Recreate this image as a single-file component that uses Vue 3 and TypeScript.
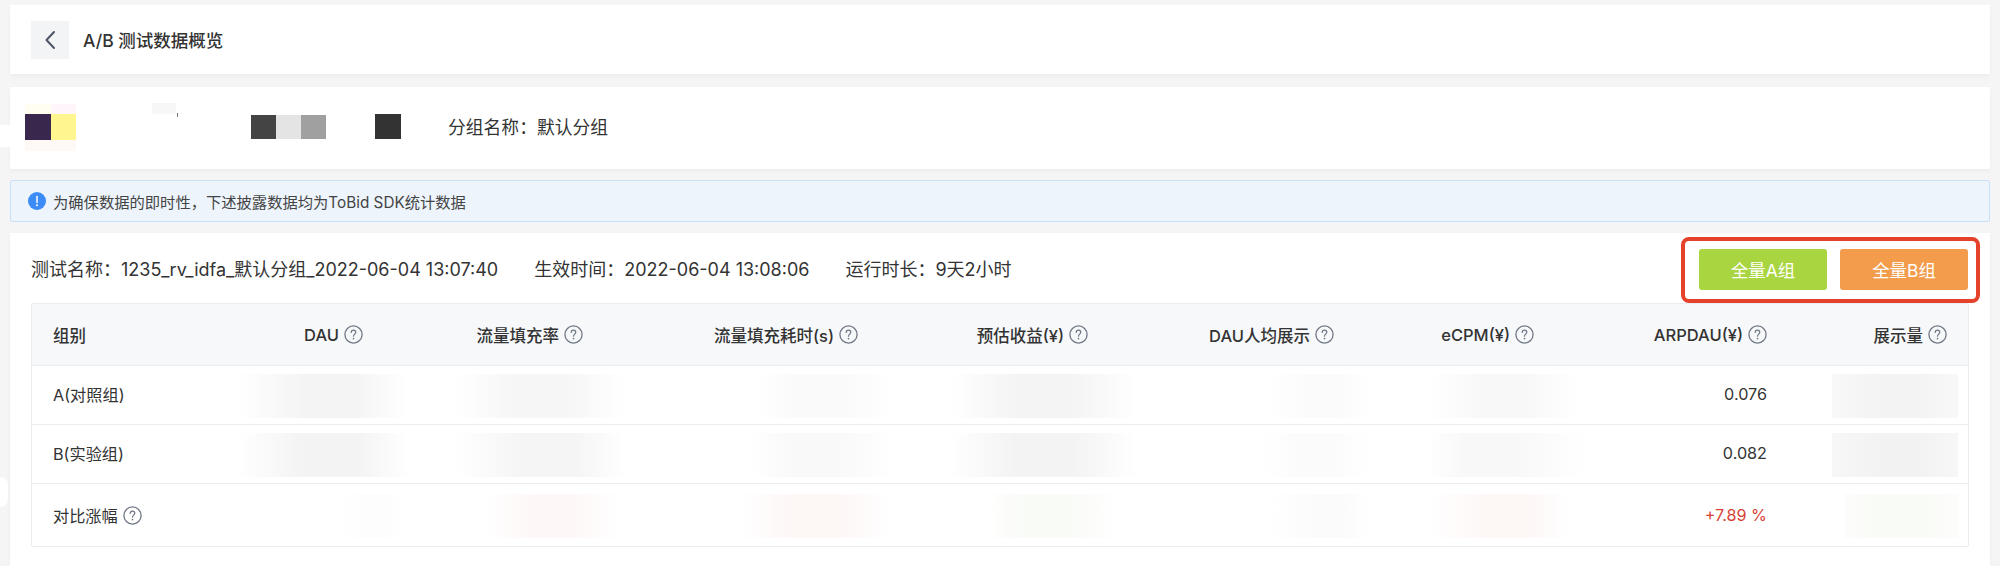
<script setup lang="ts">
interface Cell { text?: string; help?: boolean; red?: boolean }
interface Patch { left: number; width: number; peak: number; color: string; edge?: string }

const headers = [
  { text: '组别' },
  { text: 'DAU', help: true },
  { text: '流量填充率', help: true },
  { text: '流量填充耗时(s)', help: true },
  { text: '预估收益(¥)', help: true },
  { text: 'DAU人均展示', help: true },
  { text: 'eCPM(¥)', help: true },
  { text: 'ARPDAU(¥)', help: true },
  { text: '展示量', help: true },
]

const rows: { cells: Cell[]; patches: Patch[]; cls: string }[] = [
  {
    cls: 'row-a',
    cells: [{ text: 'A(对照组)' }, {}, {}, {}, {}, {}, {}, { text: '0.076' }, {}],
    patches: [
      { left: 237, width: 169, peak: 55, color: '#f4f4f4' },
      { left: 455, width: 170, peak: 50, color: '#f6f6f6' },
      { left: 758, width: 138, peak: 45, color: '#fafafa' },
      { left: 950, width: 187, peak: 50, color: '#f4f4f4' },
      { left: 1267, width: 103, peak: 55, color: '#fbfbfb' },
      { left: 1427, width: 153, peak: 50, color: '#f8f8f8' },
      { left: 1832, width: 126, peak: 55, color: '#f3f3f3', edge: '#f8f8f8' },
    ],
  },
  {
    cls: 'row-b',
    cells: [{ text: 'B(实验组)' }, {}, {}, {}, {}, {}, {}, { text: '0.082' }, {}],
    patches: [
      { left: 237, width: 171, peak: 55, color: '#f3f3f3' },
      { left: 455, width: 170, peak: 55, color: '#f5f5f5' },
      { left: 750, width: 146, peak: 45, color: '#f9f9f9' },
      { left: 950, width: 187, peak: 50, color: '#f3f3f3' },
      { left: 1262, width: 108, peak: 50, color: '#fbfbfb' },
      { left: 1427, width: 160, peak: 40, color: '#f8f8f8' },
      { left: 1832, width: 126, peak: 55, color: '#f2f2f2', edge: '#f7f7f7' },
    ],
  },
  {
    cls: 'row-c',
    cells: [{ text: '对比涨幅', help: true }, {}, {}, {}, {}, {}, {}, { text: '+7.89 %', red: true }, {}],
    patches: [
      { left: 340, width: 70, peak: 50, color: '#fdfdfd' },
      { left: 484, width: 136, peak: 50, color: '#fdf8f7' },
      { left: 740, width: 152, peak: 50, color: '#fdf7f6' },
      { left: 985, width: 137, peak: 45, color: '#f9fbf7' },
      { left: 1270, width: 100, peak: 60, color: '#fbfbfb' },
      { left: 1430, width: 140, peak: 55, color: '#fdf7f6' },
      { left: 1845, width: 113, peak: 50, color: '#f9fbf6', edge: '#fcfdfb' },
    ],
  },
]

function patchStyle(p: Patch) {
  const edge = p.edge ?? '#ffffff'
  return {
    left: `${p.left - 32}px`,
    width: `${p.width}px`,
    background: `linear-gradient(90deg, ${edge} 0%, ${p.color} ${p.peak - 15}%, ${p.color} ${p.peak + 15}%, ${edge} 100%)`,
  }
}

const mosaic = [
  { l: 25, t: 104, w: 26, h: 10, c: '#fffef0' },
  { l: 51, t: 104, w: 25, h: 10, c: '#fff6fb' },
  { l: 25, t: 114, w: 26, h: 26, c: '#3a274d' },
  { l: 51, t: 114, w: 25, h: 26, c: '#fff68f' },
  { l: 25, t: 140, w: 51, h: 11, c: '#fff9f6' },
  { l: 152, t: 103, w: 24, h: 11, c: '#f7f7f7' },
  { l: 177, t: 113, w: 1, h: 4, c: '#777777' },
  { l: 251, t: 115, w: 25, h: 24, c: '#444444' },
  { l: 276, t: 115, w: 25, h: 24, c: '#e4e4e4' },
  { l: 301, t: 115, w: 25, h: 24, c: '#a0a0a0' },
  { l: 375, t: 114, w: 26, h: 25, c: '#333333' },
]

function mosaicStyle(m: { l: number; t: number; w: number; h: number; c: string }) {
  return {
    left: `${m.l - 10}px`,
    top: `${m.t - 87}px`,
    width: `${m.w}px`,
    height: `${m.h}px`,
    background: m.c,
  }
}
</script>

<template>
  <div class="page">
    <span class="bump bump-top"></span>
    <span class="bump bump-bottom"></span>

    <header class="card title-card">
      <button class="back" type="button" aria-label="返回">
        <svg width="12" height="20" viewBox="0 0 12 20" fill="none">
          <path d="M10 2 L2.5 10 L10 18" stroke="#4b5563" stroke-width="2" stroke-linecap="round" stroke-linejoin="round" />
        </svg>
      </button>
      <h1 class="title">A/B 测试数据概览</h1>
    </header>

    <section class="card group-card">
      <span v-for="(m, i) in mosaic" :key="i" class="piece" :style="mosaicStyle(m)"></span>
      <span class="group-name">分组名称：默认分组</span>
    </section>

    <div class="alert">
      <svg class="alert-icon" width="18" height="18" viewBox="0 0 18 18">
        <circle cx="9" cy="9" r="9" fill="#3b8cf6" />
        <path d="M9 4.5 V10.5" stroke="#fff" stroke-width="1.5" stroke-linecap="round" />
        <circle cx="9" cy="13.2" r="1" fill="#fff" />
      </svg>
      <span>为确保数据的即时性，下述披露数据均为ToBid SDK统计数据</span>
    </div>

    <section class="card main-card">
      <div class="meta-row">
        <div class="meta">
          <span>测试名称：1235_rv_idfa_默认分组_2022-06-04 13:07:40</span>
          <span>生效时间：2022-06-04 13:08:06</span>
          <span>运行时长：9天2小时</span>
        </div>
        <div class="actions">
          <button class="btn btn-a" type="button">全量A组</button>
          <button class="btn btn-b" type="button">全量B组</button>
        </div>
      </div>

      <div class="table">
        <div class="tr thead">
          <div v-for="(h, i) in headers" :key="i" class="td" :class="{ first: i === 0 }">
            <span>{{ h.text }}</span>
            <svg v-if="h.help" class="help" width="19" height="19" viewBox="0 0 19 19" fill="none">
              <circle cx="9.5" cy="9.5" r="8.6" stroke="#6f7785" stroke-width="1.3" />
              <path d="M7.2 7.5 C7.2 6.1 8.2 5.2 9.5 5.2 C10.9 5.2 11.8 6.1 11.8 7.3 C11.8 9 9.5 9.2 9.5 11.2" stroke="#6f7785" stroke-width="1.2" stroke-linecap="round" />
              <circle cx="9.5" cy="13.6" r="0.85" fill="#6f7785" />
            </svg>
          </div>
        </div>
        <div v-for="row in rows" :key="row.cls" class="tr" :class="row.cls">
          <span v-for="(p, j) in row.patches" :key="j" class="patch" :style="patchStyle(p)"></span>
          <div v-for="(c, i) in row.cells" :key="i" class="td" :class="{ first: i === 0 }">
            <span v-if="c.text" :class="{ red: c.red }">{{ c.text }}</span>
            <svg v-if="c.help" class="help" width="19" height="19" viewBox="0 0 19 19" fill="none">
              <circle cx="9.5" cy="9.5" r="8.6" stroke="#6f7785" stroke-width="1.3" />
              <path d="M7.2 7.5 C7.2 6.1 8.2 5.2 9.5 5.2 C10.9 5.2 11.8 6.1 11.8 7.3 C11.8 9 9.5 9.2 9.5 11.2" stroke="#6f7785" stroke-width="1.2" stroke-linecap="round" />
              <circle cx="9.5" cy="13.6" r="0.85" fill="#6f7785" />
            </svg>
          </div>
        </div>
      </div>
    </section>
  </div>
</template>

<style>
html, body { margin: 0; height: 566px; overflow: hidden; background: #f5f5f5; }
</style>

<style scoped>
.page {
  position: relative;
  box-sizing: border-box;
  width: 2000px;
  height: 566px;
  overflow: hidden;
  padding: 5px 10px 0;
  background: #f5f5f5;
  display: flex;
  flex-direction: column;
  font-family: Inter, "Noto Sans CJK SC", sans-serif;
  color: #333;
}
.bump { position: absolute; left: 0; background: #fff; z-index: 2; }
.bump-top { top: 125px; width: 24px; height: 22px; border-radius: 0 10px 10px 0; }
.bump-bottom { top: 477px; width: 8px; height: 30px; border-radius: 0 12px 12px 0; }
.card {
  background: #fff;
  box-shadow: 0 2px 4px rgba(0, 0, 0, 0.04);
}
.title-card {
  height: 69px;
  display: flex;
  align-items: center;
  padding-left: 21px;
  gap: 14px;
  flex: none;
}
.back {
  width: 38px;
  height: 38px;
  border: 0;
  padding: 0;
  background: #f3f4f6;
  display: flex;
  align-items: center;
  justify-content: center;
}
.title { margin: 0; font-size: 17.5px; font-weight: 500; color: #333; }
.group-card {
  position: relative;
  margin-top: 13px;
  height: 82px;
  flex: none;
  display: flex;
  align-items: center;
  padding-left: 438px;
  font-size: 17.8px;
}
.group-name { margin-top: -4px; }
.piece { position: absolute; }
.alert {
  margin-top: 11px;
  height: 42px;
  flex: none;
  box-sizing: border-box;
  border: 1px solid #c9dff7;
  border-radius: 2px;
  background: #edf4fc;
  display: flex;
  align-items: center;
  padding-left: 17px;
  gap: 7px;
  font-size: 15.3px;
  color: #444;
}
.main-card {
  margin-top: 11px;
  flex: 1;
  padding: 0 20px 0 21px;
}
.meta-row {
  height: 70px;
  display: flex;
  align-items: center;
  justify-content: space-between;
}
.meta { display: flex; gap: 36px; font-size: 18px; color: #333; }
.actions {
  box-sizing: border-box;
  position: relative;
  display: flex;
  gap: 13px;
  width: 299px;
  height: 66px;
  margin-right: -10px;
  margin-top: 4px;
  padding: 8px 6px 0 14px;
  border: 4px solid #e6412b;
  border-radius: 8px;
  background: #fff;
  z-index: 1;
}
.btn {
  width: 128px;
  height: 41px;
  flex: none;
  border: 0;
  border-radius: 3px;
  color: #fff;
  font: inherit;
  font-size: 17.4px;
}
.btn-a { background: #a8d540; }
.btn-b { background: #f39c4c; }
.table {
  box-sizing: border-box;
  width: 1938px;
  border: 1px solid #ececee;
  border-radius: 2px;
}
.tr {
  position: relative;
  display: grid;
  grid-template-columns: 200px 152px 220px 275px 230px 246px 200px 233px 180px;
  border-bottom: 1px solid #ececee;
  font-size: 16.2px;
}
.tr:last-child { border-bottom: 0; }
.thead {
  height: 61px;
  background: #f7f8fa;
  font-size: 16.5px;
  font-weight: 500;
}
.row-a, .row-b { height: 58px; }
.row-c { height: 62px; }
.patch { position: absolute; top: 8px; height: 44px; }
.row-c .patch { top: 10px; }
.td {
  position: relative;
  display: flex;
  align-items: center;
  justify-content: flex-end;
  gap: 5px;
  padding-right: 21px;
}
.td.first { justify-content: flex-start; padding-left: 21px; padding-right: 0; }
.help { flex: none; }
.red { color: #d64236; }
.row-a .td > span, .row-b .td > span { margin-top: -2px; }
</style>
